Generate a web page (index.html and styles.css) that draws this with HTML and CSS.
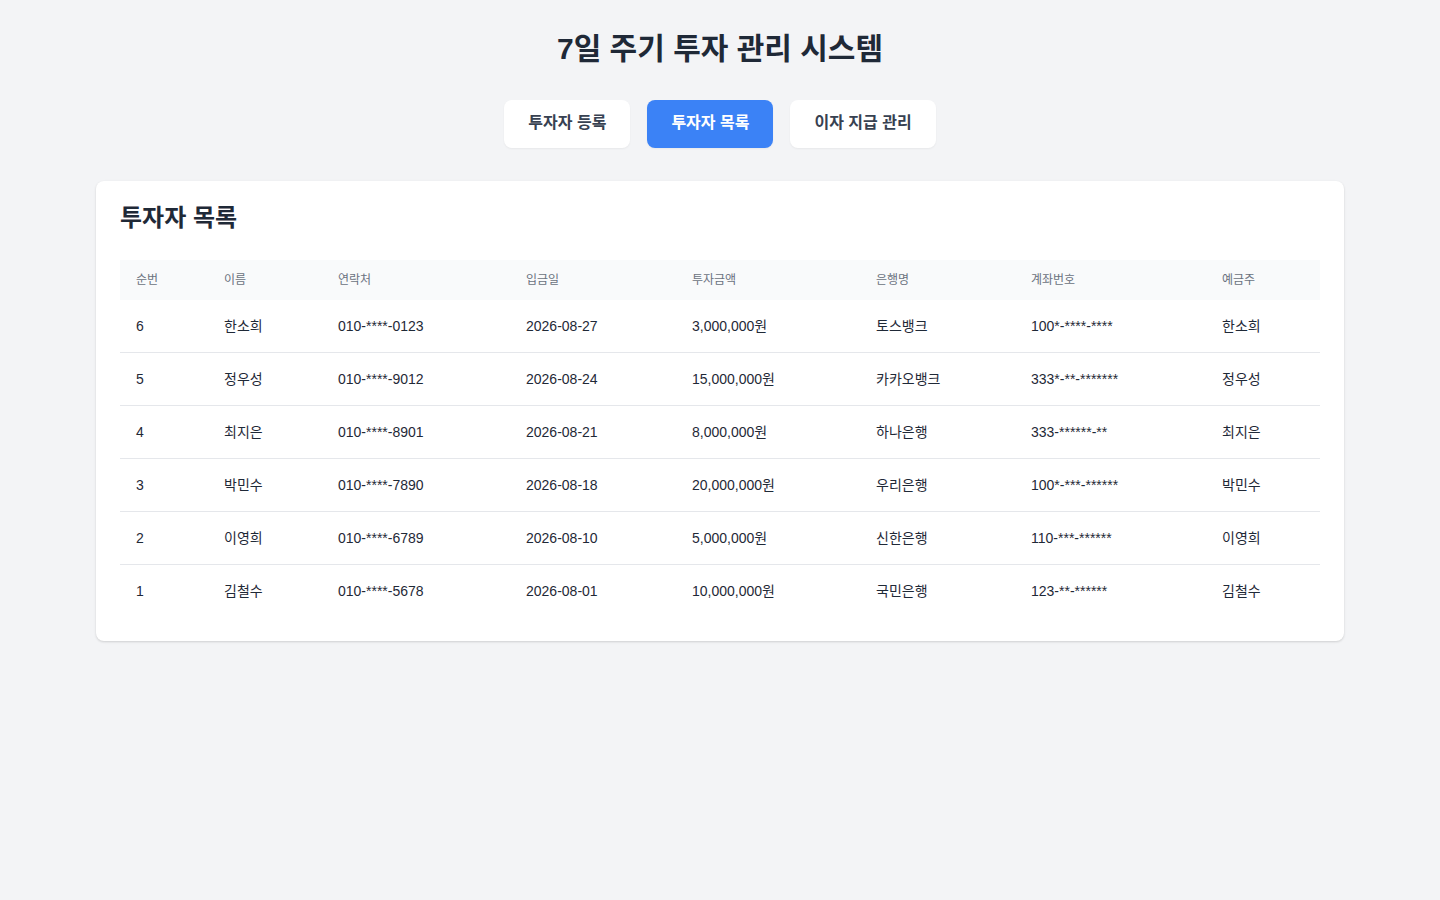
FILE: index.html
```html
<!DOCTYPE html>
<html lang="ko">
<head>
<meta charset="utf-8">
<title>7일 주기 투자 관리 시스템</title>
<link rel="stylesheet" href="styles.css">
</head>
<body>
<div class="container">
  <h1 class="page-title">7일 주기 투자 관리 시스템</h1>
  <nav class="tabs">
    <button class="tab">투자자 등록</button>
    <button class="tab active">투자자 목록</button>
    <button class="tab">이자 지급 관리</button>
  </nav>
  <section class="card">
    <h2 class="card-title">투자자 목록</h2>
    <table class="grid">
      <colgroup>
        <col class="c1"><col class="c2"><col class="c3"><col class="c4"><col class="c5"><col class="c6"><col class="c7"><col class="c8">
      </colgroup>
      <thead>
        <tr><th>순번</th><th>이름</th><th>연락처</th><th>입금일</th><th>투자금액</th><th>은행명</th><th>계좌번호</th><th>예금주</th></tr>
      </thead>
      <tbody>
        <tr><td>6</td><td>한소희</td><td>010-****-0123</td><td>2026-08-27</td><td>3,000,000원</td><td>토스뱅크</td><td>100*-****-****</td><td>한소희</td></tr>
        <tr><td>5</td><td>정우성</td><td>010-****-9012</td><td>2026-08-24</td><td>15,000,000원</td><td>카카오뱅크</td><td>333*-**-*******</td><td>정우성</td></tr>
        <tr><td>4</td><td>최지은</td><td>010-****-8901</td><td>2026-08-21</td><td>8,000,000원</td><td>하나은행</td><td>333-******-**</td><td>최지은</td></tr>
        <tr><td>3</td><td>박민수</td><td>010-****-7890</td><td>2026-08-18</td><td>20,000,000원</td><td>우리은행</td><td>100*-***-******</td><td>박민수</td></tr>
        <tr><td>2</td><td>이영희</td><td>010-****-6789</td><td>2026-08-10</td><td>5,000,000원</td><td>신한은행</td><td>110-***-******</td><td>이영희</td></tr>
        <tr><td>1</td><td>김철수</td><td>010-****-5678</td><td>2026-08-01</td><td>10,000,000원</td><td>국민은행</td><td>123-**-******</td><td>김철수</td></tr>
      </tbody>
    </table>
  </section>
</div>
</body>
</html>
```
FILE: styles.css
```css
* { box-sizing: border-box; }
html, body { margin: 0; padding: 0; }
body {
  background: #f3f4f6;
  font-family: "Liberation Sans", Arial, "Noto Sans CJK KR", sans-serif;
  color: #1f2937;
}
.container {
  max-width: 1280px;
  margin: 0 auto;
  padding: 31px 16px 32px;
}
.page-title {
  margin: 0 0 33px;
  text-align: center;
  font-size: 30px;
  line-height: 36px;
  font-weight: 700;
  color: #1f2937;
}
.tabs {
  display: flex;
  justify-content: center;
  gap: 17px;
  margin-bottom: 33px;
}
.tab {
  font-family: inherit;
  font-size: 16px;
  line-height: 24px;
  font-weight: 700;
  padding: 11px 24px 13px;
  border: none;
  border-radius: 8px;
  background: #ffffff;
  color: #374151;
  box-shadow: 0 1px 2px rgba(0,0,0,0.05);
  cursor: pointer;
}
.tab.active {
  background: #3b82f6;
  color: #ffffff;
}
.card {
  background: #ffffff;
  border-radius: 8px;
  box-shadow: 0 1px 3px rgba(0,0,0,0.1), 0 1px 2px rgba(0,0,0,0.06);
  padding: 24px;
}
.card-title {
  margin: 0 0 30px;
  font-size: 24px;
  line-height: 25px;
  font-weight: 700;
  color: #1f2937;
}
.grid {
  width: 100%;
  border-collapse: collapse;
  table-layout: fixed;
}
.c1 { width: 88px; }
.c2 { width: 114px; }
.c3 { width: 188px; }
.c4 { width: 166px; }
.c5 { width: 184px; }
.c6 { width: 155px; }
.c7 { width: 191px; }
.c8 { width: 114px; }
.grid th {
  background: #f9fafb;
  text-align: left;
  font-size: 12px;
  line-height: 16px;
  font-weight: 400;
  color: #6b7280;
  padding: 12px 16px;
}
.grid td {
  font-size: 14px;
  line-height: 20px;
  color: #1f2937;
  padding: 16px;
  border-bottom: 1px solid #e5e7eb;
}
.grid tbody tr:last-child td { border-bottom: none; }
```
